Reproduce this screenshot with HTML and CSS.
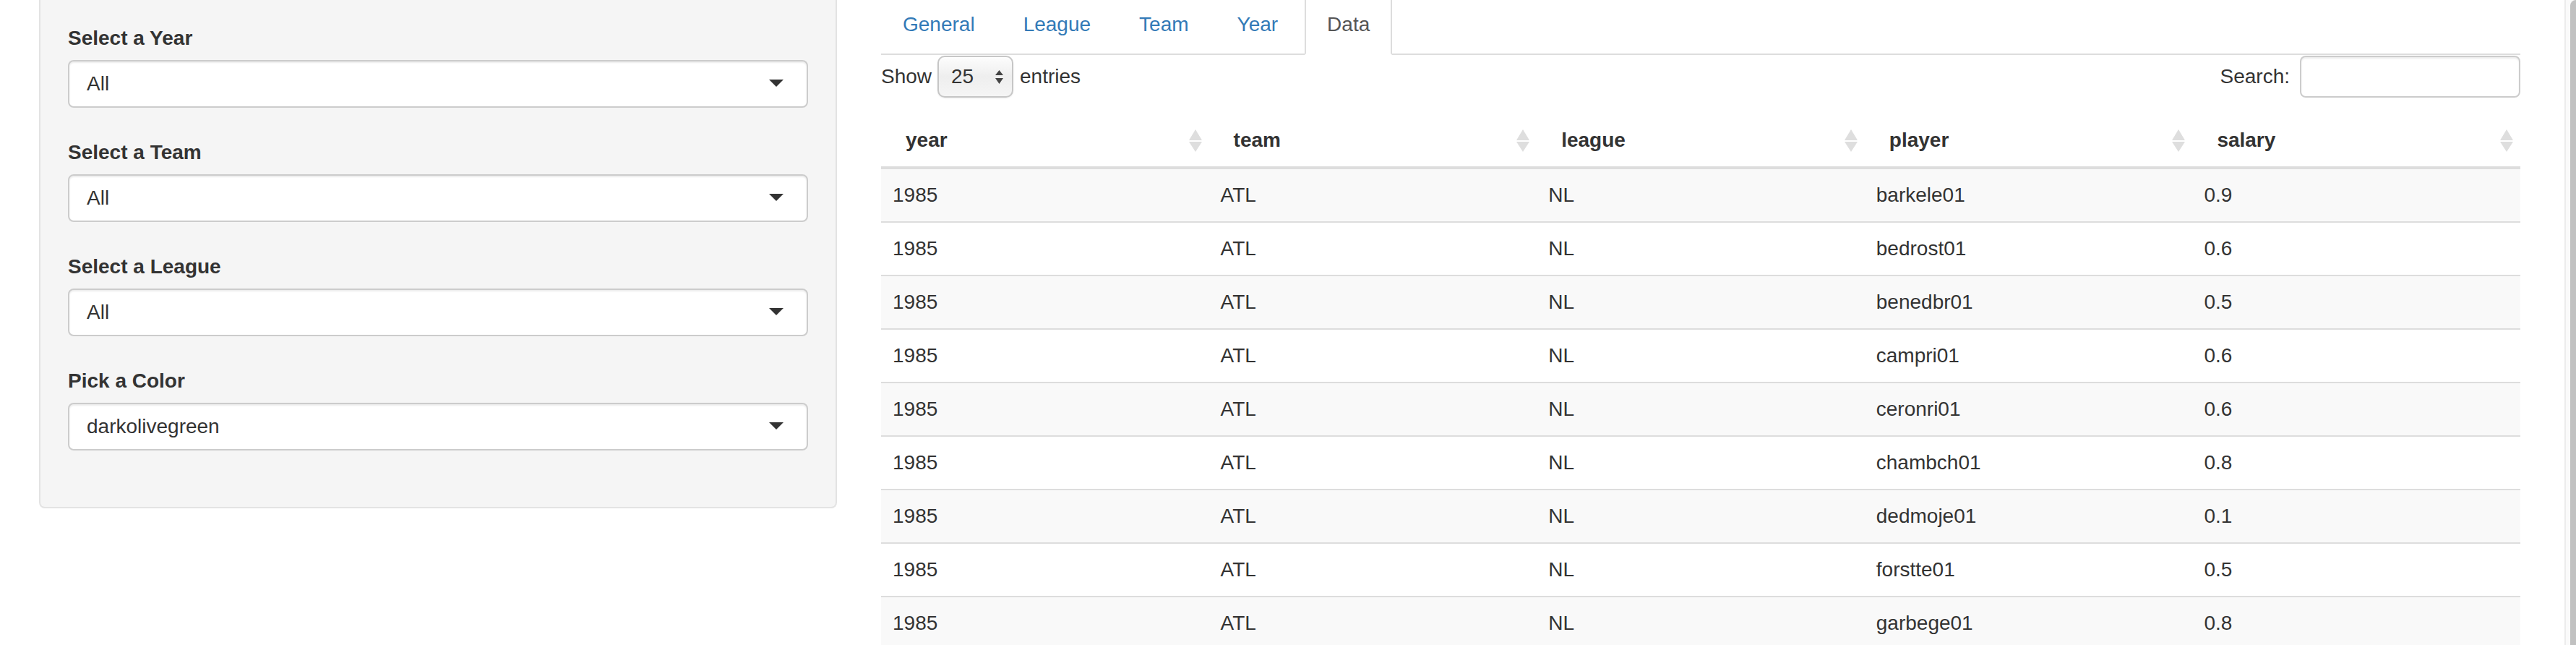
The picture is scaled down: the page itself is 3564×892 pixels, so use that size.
FILE: index.html
```html
<!DOCTYPE html>
<html lang="en">
<head>
<meta charset="utf-8">
<title>Salaries</title>
<link rel="stylesheet" href="styles.css">
</head>
<body>
<div class="page">
  <aside class="sidebar">
    <form class="well">
      <div class="form-group">
        <label class="control-label">Select a Year</label>
        <div class="selectize"><span class="value">All</span><span class="caret"></span></div>
      </div>
      <div class="form-group">
        <label class="control-label">Select a Team</label>
        <div class="selectize"><span class="value">All</span><span class="caret"></span></div>
      </div>
      <div class="form-group">
        <label class="control-label">Select a League</label>
        <div class="selectize"><span class="value">All</span><span class="caret"></span></div>
      </div>
      <div class="form-group">
        <label class="control-label">Pick a Color</label>
        <div class="selectize"><span class="value">darkolivegreen</span><span class="caret"></span></div>
      </div>
    </form>
  </aside>
  <main class="main">
    <ul class="nav-tabs">
      <li><a href="#">General</a></li>
      <li><a href="#">League</a></li>
      <li><a href="#">Team</a></li>
      <li><a href="#">Year</a></li>
      <li class="active"><a href="#">Data</a></li>
    </ul>
    <div class="dt-controls">
      <div class="dt-length">
        <span>Show</span>
        <div class="len-select">
          <span>25</span>
          <svg class="len-arrows" width="11" height="19" viewBox="0 0 11 19"><polygon points="5.5,0 11,7 0,7"/><polygon points="0,11 11,11 5.5,19"/></svg>
        </div>
        <span>entries</span>
      </div>
      <div class="dt-filter">
        <label>Search:</label>
        <input class="search-input" type="search">
      </div>
    </div>
    <table class="data-table">
      <thead>
        <tr>
          <th><div class="th-inner"><span>year</span><svg class="sort" width="18" height="31" viewBox="0 0 18 31"><polygon points="9,0 18,15 0,15"/><polygon points="0,17 18,17 9,31"/></svg></div></th>
          <th><div class="th-inner"><span>team</span><svg class="sort" width="18" height="31" viewBox="0 0 18 31"><polygon points="9,0 18,15 0,15"/><polygon points="0,17 18,17 9,31"/></svg></div></th>
          <th><div class="th-inner"><span>league</span><svg class="sort" width="18" height="31" viewBox="0 0 18 31"><polygon points="9,0 18,15 0,15"/><polygon points="0,17 18,17 9,31"/></svg></div></th>
          <th><div class="th-inner"><span>player</span><svg class="sort" width="18" height="31" viewBox="0 0 18 31"><polygon points="9,0 18,15 0,15"/><polygon points="0,17 18,17 9,31"/></svg></div></th>
          <th><div class="th-inner"><span>salary</span><svg class="sort" width="18" height="31" viewBox="0 0 18 31"><polygon points="9,0 18,15 0,15"/><polygon points="0,17 18,17 9,31"/></svg></div></th>
        </tr>
      </thead>
      <tbody>
        <tr><td>1985</td><td>ATL</td><td>NL</td><td>barkele01</td><td>0.9</td></tr>
        <tr><td>1985</td><td>ATL</td><td>NL</td><td>bedrost01</td><td>0.6</td></tr>
        <tr><td>1985</td><td>ATL</td><td>NL</td><td>benedbr01</td><td>0.5</td></tr>
        <tr><td>1985</td><td>ATL</td><td>NL</td><td>campri01</td><td>0.6</td></tr>
        <tr><td>1985</td><td>ATL</td><td>NL</td><td>ceronri01</td><td>0.6</td></tr>
        <tr><td>1985</td><td>ATL</td><td>NL</td><td>chambch01</td><td>0.8</td></tr>
        <tr><td>1985</td><td>ATL</td><td>NL</td><td>dedmoje01</td><td>0.1</td></tr>
        <tr><td>1985</td><td>ATL</td><td>NL</td><td>forstte01</td><td>0.5</td></tr>
        <tr><td>1985</td><td>ATL</td><td>NL</td><td>garbege01</td><td>0.8</td></tr>
      </tbody>
    </table>
  </main>
</div>
<div class="scrollbar"><div class="thumb"></div></div>
</body>
</html>
```
FILE: styles.css
```css
html, body {
  margin: 0;
  height: 892px;
  overflow: hidden;
  background: #fff;
}
body {
  font-family: "Liberation Sans", Arial, Helvetica, sans-serif;
  font-size: 28px;
  line-height: 40px;
  color: #333;
}
.page {
  display: flex;
  align-items: flex-start;
  padding-left: 54px;
  gap: 61px;
}
.sidebar {
  flex: none;
  width: 1104px;
}
.well {
  margin: 0;
  background: #f5f5f5;
  border: 2px solid #e3e3e3;
  border-top: 0;
  border-radius: 0 0 8px 8px;
  padding: 33px 38px 36px;
}
.form-group {
  margin-bottom: 42px;
}
.control-label {
  display: block;
  font-weight: bold;
  margin-bottom: 10px;
}
.selectize {
  display: flex;
  align-items: center;
  box-sizing: border-box;
  height: 66px;
  padding: 0 32px 0 24px;
  background: #fff;
  border: 2px solid #ccc;
  border-radius: 8px;
  box-shadow: inset 0 2px 2px rgba(0, 0, 0, 0.075);
}
.selectize .value {
  flex: 1;
}
.caret {
  width: 0;
  height: 0;
  margin-top: -2px;
  border-left: 10px solid transparent;
  border-right: 10px solid transparent;
  border-top: 10px solid #333;
}
.main {
  flex: none;
  width: 2268px;
}
.nav-tabs {
  display: flex;
  list-style: none;
  margin: 0;
  padding: 0;
  border-bottom: 2px solid #ddd;
}
.nav-tabs li {
  margin-bottom: -2px;
  margin-right: 7px;
}
.nav-tabs a {
  display: block;
  padding: 14px 28px 20px;
  border: 2px solid transparent;
  border-top: 0;
  color: #337ab7;
  text-decoration: none;
}
.nav-tabs li.active a {
  color: #555;
  background: #fff;
  border-color: #ddd;
  border-bottom-color: transparent;
  padding-left: 29px;
  padding-right: 29px;
}
.dt-controls {
  display: flex;
  justify-content: space-between;
  align-items: center;
  height: 58px;
  margin-top: 1px;
}
.dt-length {
  display: flex;
  align-items: center;
}
.len-select {
  display: flex;
  align-items: center;
  justify-content: space-between;
  box-sizing: border-box;
  width: 105px;
  height: 58px;
  margin: 0 9px 0 8px;
  padding: 0 12px 0 17px;
  border: 2px solid #c6c6c6;
  border-radius: 10px;
  background: linear-gradient(#fdfdfd, #eeeeee 50%, #f5f5f5);
  box-shadow: 0 1px 2px rgba(0, 0, 0, 0.08);
  color: #333;
}
.len-arrows {
  fill: #444;
}
.dt-filter {
  display: flex;
  align-items: center;
}
.search-input {
  box-sizing: border-box;
  width: 305px;
  height: 58px;
  margin: 0 0 0 14px;
  border: 2px solid #ccc;
  border-radius: 8px;
  box-shadow: inset 0 2px 2px rgba(0, 0, 0, 0.075);
  background: #fff;
}
.data-table {
  width: 100%;
  margin-top: 23px;
  table-layout: fixed;
  border-collapse: separate;
  border-spacing: 0;
}
.data-table th {
  padding: 16px 10px 16px 34px;
  border-bottom: 4px solid #ddd;
  text-align: left;
  font-weight: bold;
}
.th-inner {
  display: flex;
  justify-content: space-between;
  align-items: center;
}
.sort {
  fill: #dedede;
}
.data-table td {
  padding: 16px;
  border-top: 2px solid #ddd;
}
.data-table tbody tr:first-child td {
  border-top: 0;
}
.data-table tbody tr:nth-child(odd) td {
  background: #f9f9f9;
}
.scrollbar {
  position: fixed;
  top: 0;
  right: 0;
  width: 16px;
  height: 892px;
  box-sizing: border-box;
  border-left: 2px solid #ececec;
  background: #fafafa;
  overflow: hidden;
}
.thumb {
  margin-left: 6px;
  width: 16px;
  height: 1200px;
  border-radius: 8px;
  background: #c1c1c1;
}
```
